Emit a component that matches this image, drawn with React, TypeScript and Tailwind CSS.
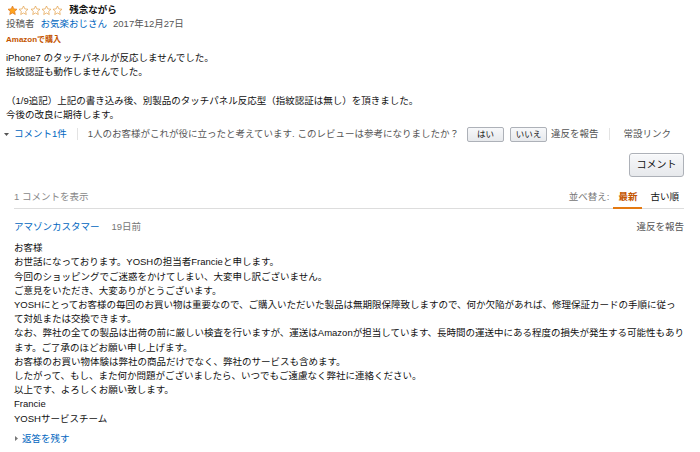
import React from 'react';

const Star = ({ filled }: { filled: boolean }) => (
    <svg width="11" height="11" viewBox="0 0 24 24" className="shrink-0">
        <path
            d="M12 2.2l2.95 6.3 6.85.8-5.1 4.7 1.35 6.8L12 17.4l-6.05 3.4 1.35-6.8-5.1-4.7 6.85-.8z"
            fill={filled ? '#ffa41c' : 'none'}
            stroke={filled ? '#de7921' : '#e3a04a'}
            strokeWidth="1.6"
            strokeLinejoin="round"
        />
    </svg>
);

const Caret = ({ dir }: { dir: 'down' | 'right' }) => (
    <svg width="5" height="5" viewBox="0 0 5 5" className="shrink-0">
        {dir === 'down' ? (
            <path d="M0 1h5L2.5 4z" fill="#555" />
        ) : (
            <path d="M1 0v5l3-2.5z" fill="#777" />
        )}
    </svg>
);

const Divider = () => <span className="w-px h-[12px] bg-[#e3e3e3]" />;

const replyLines = [
    'お客様',
    'お世話になっております。YOSHの担当者Francieと申します。',
    '今回のショッピングでご迷惑をかけてしまい、大変申し訳ございません。',
    'ご意見をいただき、大変ありがとうございます。',
    'YOSHにとってお客様の毎回のお買い物は重要なので、ご購入いただいた製品は無期限保障致しますので、何か欠陥があれば、修理保証カードの手順に従っ',
    'て対処または交換できます。',
    'なお、弊社の全ての製品は出荷の前に厳しい検査を行いますが、運送はAmazonが担当しています、長時間の運送中にある程度の損失が発生する可能性もあり',
    'ます。ご了承のほどお願い申し上げます。',
    'お客様のお買い物体験は弊社の商品だけでなく、弊社のサービスも含めます。',
    'したがって、もし、また何か問題がございましたら、いつでもご遠慮なく弊社に連絡ください。',
    '以上です、よろしくお願い致します。',
    'Francie',
    'YOSHサービスチーム',
];

export default function App() {
    return (
        <div className="w-[700px] h-[452px] overflow-hidden bg-white pl-[6px] pr-[16px] pt-[3px] text-[9.5px] leading-[14.2px] text-[#111] font-['Liberation_Sans','Noto_Sans_CJK_JP',sans-serif]">
            {/* review header */}
            <div className="flex items-center h-[14px]">
                <div className="flex items-center gap-[0.3px] ml-[1px]">
                    <Star filled />
                    <Star filled={false} />
                    <Star filled={false} />
                    <Star filled={false} />
                    <Star filled={false} />
                </div>
                <span className="ml-[6px] font-bold">残念ながら</span>
            </div>
            <div className="flex items-center h-[14.2px] text-[#555]">
                <span>投稿者</span>
                <a className="ml-[6px] text-[#0066c0]">お気楽おじさん</a>
                <span className="ml-[6px]">2017年12月27日</span>
            </div>
            <div className="mt-[2px] h-[14px] flex items-center text-[8px] font-bold text-[#c45500]">
                Amazonで購入
            </div>

            <div className="mt-[4px] whitespace-nowrap">
                iPhone7 のタッチパネルが反応しませんでした。
                <br />
                指紋認証も動作しませんでした。
                <br />
                <br />
                （1/9追記）上記の書き込み後、別製品のタッチパネル反応型（指紋認証は無し）を頂きました。
                <br />
                今後の改良に期待します。
            </div>

            {/* actions row */}
            <div className="mt-[4px] h-[16px] flex items-center whitespace-nowrap">
                <span className="-ml-[2px]">
                    <Caret dir="down" />
                </span>
                <a className="ml-[5px] text-[#0066c0]">コメント1件</a>
                <span className="mx-[10px] flex items-center">
                    <Divider />
                </span>
                <span className="text-[#555]">
                    1人のお客様がこれが役に立ったと考えています. このレビューは参考になりましたか？
                </span>
                <button className="ml-[8px] w-[37px] h-[15px] rounded-[2px] border border-[#adb1b8] bg-linear-to-b from-[#f7f8fa] to-[#e7e9ec] text-[8.5px] leading-none text-[#111]">
                    はい
                </button>
                <button className="ml-[6px] w-[37px] h-[15px] rounded-[2px] border border-[#adb1b8] bg-linear-to-b from-[#f7f8fa] to-[#e7e9ec] text-[8.5px] leading-none text-[#111]">
                    いいえ
                </button>
                <a className="ml-[4px] text-[#555]">違反を報告</a>
                <span className="mx-[11px] flex items-center">
                    <Divider />
                </span>
                <a className="ml-[2px] text-[#555]">常設リンク</a>
            </div>

            <div className="mt-[11px] flex justify-end">
                <button className="w-[55px] h-[24px] rounded-[3px] border border-[#adb1b8] bg-linear-to-b from-[#f7f8fa] to-[#e7e9ec] text-[10px] leading-none text-[#111] shadow-[0_1px_0_rgba(255,255,255,0.6)_inset]">
                    コメント
                </button>
            </div>

            {/* comments */}
            <div className="ml-[8px] mt-[13px]">
                <div className="flex items-end justify-between border-b border-[#ddd]">
                    <span className="pb-[4px] leading-[14px] text-[#888]">1 コメントを表示</span>
                    <div className="flex items-end leading-[14px]">
                        <span className="pb-[4px] mr-[4px] text-[#767676]">並べ替え:</span>
                        <span className="px-[5px] pb-[3px] -mb-px border-b-2 border-[#e47911] font-bold text-[#c45500]">
                            最新
                        </span>
                        <span className="px-[5px] pb-[4px] ml-[3px] text-[#111]">古い順</span>
                    </div>
                </div>

                <div className="mt-[11px] h-[14px] flex items-center justify-between">
                    <div className="flex items-center">
                        <a className="text-[#0066c0]">アマゾンカスタマー</a>
                        <span className="ml-[12px] text-[#767676]">19日前</span>
                    </div>
                    <a className="text-[#555]">違反を報告</a>
                </div>

                <div className="mt-[7px] whitespace-nowrap">
                    {replyLines.map((line, i) => (
                        <div key={i}>{line}</div>
                    ))}
                </div>

                <div className="mt-[6px] h-[14px] flex items-center">
                    <Caret dir="right" />
                    <a className="ml-[3px] text-[#0066c0]">返答を残す</a>
                </div>
            </div>
        </div>
    );
}
